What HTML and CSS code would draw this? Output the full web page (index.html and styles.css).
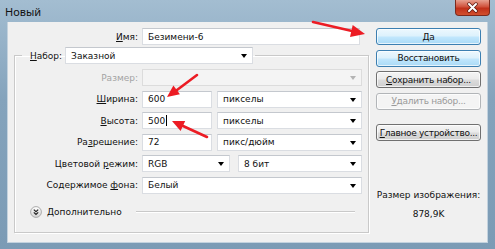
FILE: index.html
```html
<!DOCTYPE html>
<html lang="ru">
<head>
  <meta charset="UTF-8">
  <title>Новый</title>
  <link rel="stylesheet" href="styles.css">
</head>
<body>
  <div class="window">
    <div class="titlebar">
      <span class="title">Новый</span>
      <span class="close">
        <svg width="13" height="11" viewBox="0 0 13 11">
          <path d="M3 2 L10 9 M10 2 L3 9" stroke="#5a1a12" stroke-width="3.4" stroke-linecap="round"/>
          <path d="M3 2 L10 9 M10 2 L3 9" stroke="#fff" stroke-width="2" stroke-linecap="round"/>
        </svg>
      </span>
    </div>

    <div class="client">
      <div class="main">
        <div class="name-row">
          <label><u>И</u>мя:</label>
          <div class="input">Безимени-6</div>
        </div>

        <fieldset class="preset">
          <legend>
            <label><u>Н</u>абор:</label>
            <div class="select preset-select">Заказной</div>
          </legend>

          <div class="rows">
            <label class="disabled">Размер:</label>
            <div class="select disabled"></div>

            <label><u>Ш</u>ирина:</label>
            <div class="pair">
              <div class="input small">600</div>
              <div class="select">пикселы</div>
            </div>

            <label><u>В</u>ысота:</label>
            <div class="pair">
              <div class="input small">500<span class="caret"></span></div>
              <div class="select">пикселы</div>
            </div>

            <label>Ра<u>з</u>решение:</label>
            <div class="pair">
              <div class="input small">72</div>
              <div class="select">пикс/дюйм</div>
            </div>

            <label>Цветовой <u>р</u>ежим:</label>
            <div class="pair wide">
              <div class="select mode">RGB</div>
              <div class="select">8 бит</div>
            </div>

            <label>Содержимое <u>ф</u>она:</label>
            <div class="select">Белый</div>
          </div>

          <div class="advanced">
            <svg class="more" width="12" height="12" viewBox="0 0 12 12">
              <defs>
                <linearGradient id="g" x1="0" y1="0" x2="0" y2="1">
                  <stop offset="0" stop-color="#ffffff"/>
                  <stop offset="1" stop-color="#d4d4d4"/>
                </linearGradient>
              </defs>
              <circle cx="6" cy="6" r="5.4" fill="url(#g)" stroke="#a3a3a3" stroke-width="0.9"/>
              <path d="M3.8 3.6 L6 5.6 L8.2 3.6 M3.8 6.4 L6 8.4 L8.2 6.4" fill="none" stroke="#222" stroke-width="1.2"/>
            </svg>
            <span>Дополнительно</span>
            <span class="rule"></span>
          </div>
        </fieldset>
      </div>

      <div class="side">
        <button class="btn hot">Да</button>
        <button class="btn hot">Восстановить</button>
        <button class="btn"><u>С</u>охранить набор...</button>
        <button class="btn" disabled><u>У</u>далить набор...</button>
        <button class="btn device"><u>Г</u>лавное устройство...</button>
        <div class="info">
          <div>Размер изображения:</div>
          <div>878,9K</div>
        </div>
      </div>
    </div>

    <svg class="arrows" width="495" height="249" viewBox="0 0 495 249">
      <g stroke="#ec1c24" stroke-width="2.6" stroke-linecap="round" fill="#ec1c24">
        <line x1="313" y1="22" x2="352" y2="31"/>
        <line x1="197" y1="75" x2="177" y2="90"/>
        <line x1="207" y1="137" x2="183" y2="126"/>
      </g>
      <g fill="#ec1c24">
        <polygon points="365,34 352.7,25 350,37"/>
        <polygon points="167,97 173.4,85.5 179.9,94.3"/>
        <polygon points="172,121 185.2,121 180.6,131"/>
      </g>
    </svg>
  </div>
</body>
</html>
```

FILE: styles.css
```css
* {
  box-sizing: border-box;
}
body {
  margin: 0;
  font-family: "DejaVu Sans", sans-serif;
  font-size: 9px;
  color: #111;
}
u {
  text-decoration-thickness: 1px;
  text-underline-offset: 1px;
}
.window {
  position: relative;
  width: 495px;
  height: 249px;
  padding: 0 7px 6px 7px;
  display: flex;
  flex-direction: column;
  background: linear-gradient(#a3bdd1, #84a3bc 40%, #7b9bb5);
}
.titlebar {
  height: 22px;
  display: flex;
  align-items: flex-start;
}
.title {
  margin: 4px 0 0 -2px;
  font-family: "Noto Sans", sans-serif;
  font-size: 11px;
  color: #111;
}
.close {
  margin-left: auto;
  margin-right: -2px;
  width: 35px;
  height: 16px;
  display: flex;
  align-items: center;
  justify-content: center;
  border: 1px solid #7c2a1d;
  border-top: none;
  border-radius: 0 0 4px 4px;
  background: linear-gradient(#e7a090, #d0523c 45%, #c0301a 55%, #d2502e);
}
.client {
  flex: 1;
  display: flex;
  background: #f0f0f0;
  border: 1px solid #c3d2de;
  border-top: none;
}

/* left part */
.main {
  width: 367px;
  padding: 0 6px 0 6px;
}
.name-row {
  margin-top: 6px;
  display: grid;
  grid-template-columns: 124px 218px;
  column-gap: 4px;
  align-items: center;
}
label {
  text-align: right;
  white-space: nowrap;
}
.input,
.select {
  height: 17px;
  display: flex;
  align-items: center;
  padding-left: 5px;
  background: #fff;
  border: 1px solid #dadde2;
  border-top-color: #c4c8ce;
  white-space: nowrap;
}
.select {
  position: relative;
}
.select::after {
  content: "";
  position: absolute;
  right: 5px;
  top: 6px;
  border-left: 3.5px solid transparent;
  border-right: 3.5px solid transparent;
  border-top: 4px solid #000;
}
.select.disabled {
  background: #f4f4f4;
  border-color: #dcdcdc;
}
.select.disabled::after {
  border-top-color: #b4b4b4;
}
label.disabled {
  color: #a3a3a3;
}

.preset {
  margin: 2px 0 0 0;
  padding: 5px 6px 13px 0;
  border: 1px solid #c9c9c9;
  box-shadow: inset 1px 1px 0 #fff, 1px 1px 0 #fff;
}
.preset legend {
  margin-left: 7px;
  padding: 0 2px 0 8px;
  display: flex;
  align-items: center;
  gap: 3px;
}
.preset-select {
  width: 188px;
}
.rows {
  display: grid;
  grid-template-columns: 123px 1fr;
  grid-auto-rows: 17px;
  column-gap: 4px;
  row-gap: 4.6px;
  align-items: center;
}
.pair {
  display: flex;
  gap: 5px;
}
.pair.wide {
  gap: 8px;
}
.pair .select {
  flex: 1;
}
.input.small {
  width: 70px;
}
.select.mode {
  flex: 0 0 88px;
}
.caret {
  display: inline-block;
  width: 1px;
  height: 11px;
  margin-left: 1px;
  background: #000;
}
.advanced {
  margin: 12px 7px 0 15px;
  height: 13px;
  display: flex;
  align-items: center;
}
.more {
  margin-right: 5px;
}
.rule {
  flex: 1;
  margin-left: 14px;
  border-top: 1px solid #c9c9c9;
  border-bottom: 1px solid #fff;
}

/* right part */
.side {
  width: 105px;
  margin-left: 1px;
  padding-top: 6px;
  display: flex;
  flex-direction: column;
  gap: 4.5px;
}
.btn {
  height: 17px;
  padding: 0;
  font-family: inherit;
  font-size: 9px;
  letter-spacing: -0.3px;
  white-space: nowrap;
  color: #111;
  border: 1px solid #707070;
  border-radius: 3px;
  background: linear-gradient(#f4f4f4, #ebebeb 48%, #dcdcdc 52%, #cfcfcf);
  box-shadow: inset 0 0 0 1px rgba(255, 255, 255, 0.7);
}
.btn.hot {
  border-color: #3c7fb1;
  background: linear-gradient(#edf8fe, #dcf1fc 48%, #c2e7fd 52%, #a9daf6);
}
.btn:disabled {
  color: #9a9a9a;
  border-color: #b2b5b8;
  background: #f4f4f4;
}
.btn.device {
  margin-top: 10px;
}
.info {
  margin-top: 40px;
  text-align: center;
  line-height: 19px;
}

.arrows {
  position: absolute;
  top: 0;
  left: 0;
  pointer-events: none;
}
```
